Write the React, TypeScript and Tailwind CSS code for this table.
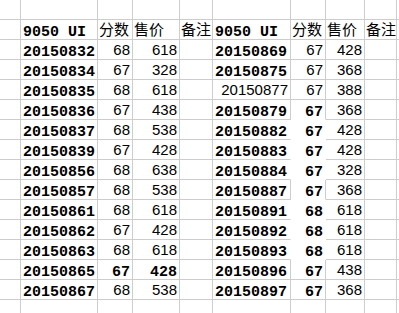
import React from "react";

type F = "m" | "s" | "c";
type Cell = { t?: string; f?: F; a?: "l" | "r" };

const widthCls = [
  "w-[21px]",
  "w-[77px]",
  "w-[35px]",
  "w-[47px]",
  "w-[33px]",
  "w-[78px]",
  "w-[35px]",
  "w-[39px]",
  "w-[32px]",
  "w-[3px]",
];

const m = (t: string, a: "l" | "r" = "l"): Cell => ({ t, f: "m", a });
const s = (t: string): Cell => ({ t, f: "s", a: "r" });
const c = (t: string): Cell => ({ t, f: "c", a: "l" });
const e: Cell = {};

const rows: Cell[][] = [
  [e, e, e, e, e, e, e, e, e, e],
  [e, m("9050 UI"), c("分数"), c("售价"), c("备注"), m("9050 UI"), c("分数"), c("售价"), c("备注"), e],
  [e, m("20150832"), s("68"), s("618"), e, m("20150869"), s("67"), s("428"), e, e],
  [e, m("20150834"), s("67"), s("328"), e, m("20150875"), s("67"), s("368"), e, e],
  [e, m("20150835"), s("68"), s("618"), e, s("20150877"), s("67"), s("388"), e, e],
  [e, m("20150836"), s("67"), s("438"), e, m("20150879"), m("67", "r"), s("368"), e, e],
  [e, m("20150837"), s("68"), s("538"), e, m("20150882"), m("67", "r"), s("428"), e, e],
  [e, m("20150839"), s("67"), s("428"), e, m("20150883"), m("67", "r"), s("428"), e, e],
  [e, m("20150856"), s("68"), s("638"), e, m("20150884"), m("67", "r"), s("328"), e, e],
  [e, m("20150857"), s("68"), s("538"), e, m("20150887"), m("67", "r"), s("368"), e, e],
  [e, m("20150861"), s("68"), s("618"), e, m("20150891"), m("68", "r"), s("618"), e, e],
  [e, m("20150862"), s("67"), s("428"), e, m("20150892"), m("68", "r"), s("618"), e, e],
  [e, m("20150863"), s("68"), s("618"), e, m("20150893"), m("68", "r"), s("618"), e, e],
  [e, m("20150865"), m("67", "r"), m("428", "r"), e, m("20150896"), m("67", "r"), s("438"), e, e],
  [e, m("20150867"), s("68"), s("538"), e, m("20150897"), m("67", "r"), s("368"), e, e],
  [e, e, e, e, e, e, e, e, e, e],
];

// cells with white fill (hide gridlines): right score column
const filledRows = new Set([6, 7, 8, 10, 11, 12]);
const isFilled = (r: number, col: number) => col === 6 && filledRows.has(r);

const fontCls: Record<F, string> = {
  m: "font-['Liberation_Mono',monospace] font-bold text-[15px] leading-[12px]",
  s: "font-['Liberation_Sans',Arial,sans-serif] text-[15px] leading-[18px]",
  c: "font-['Noto_Sans_CJK_SC',sans-serif] text-[15px] leading-[20px]",
};

function GridCell({ cell, r, col }: { cell: Cell; r: number; col: number }) {
  const hideR = isFilled(r, col) || isFilled(r, col + 1);
  const hideB = isFilled(r, col) || isFilled(r + 1, col);
  const pad =
    cell.f === "m" && cell.a === "l"
      ? "pl-[2px]"
      : cell.f === "c"
      ? "pl-[1px]"
      : "pr-[2px]";
  return (
    <div
      className={`${widthCls[col]} h-[20px] shrink-0 flex items-end whitespace-nowrap text-black bg-white ${
        cell.a === "r" ? "justify-end" : "justify-start"
      } ${hideR ? "border-r border-r-white" : "border-r border-r-[#cdcdcd]"} ${
        hideB ? "border-b border-b-white" : "border-b border-b-[#cdcdcd]"
      } ${pad}`}
    >
      {cell.t ? <span className={`${fontCls[cell.f!]} whitespace-pre`}>{cell.t}</span> : null}
    </div>
  );
}

export default function App() {
  return (
    <div className="w-[399px] h-[313px] overflow-hidden bg-white">
      <div className="flex flex-col w-[400px]">
        {rows.map((row, r) => (
          <div key={r} className="flex">
            {row.map((cell, col) => (
              <GridCell key={col} cell={cell} r={r} col={col} />
            ))}
          </div>
        ))}
      </div>
    </div>
  );
}
